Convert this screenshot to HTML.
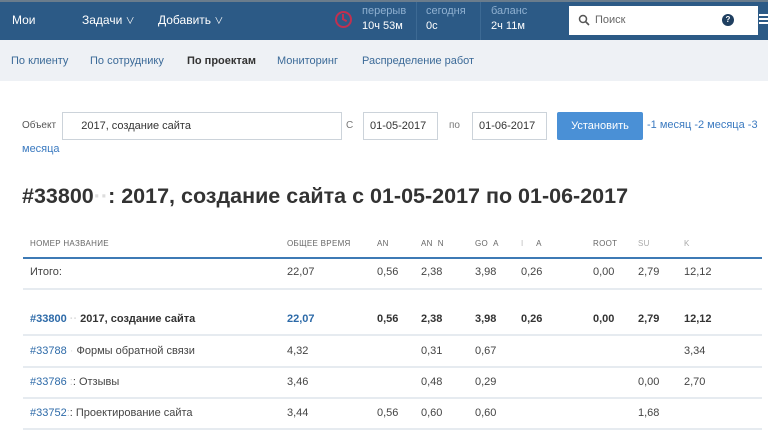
<!DOCTYPE html>
<html><head><meta charset="utf-8"><style>
*{margin:0;padding:0;box-sizing:border-box}
body{width:768px;height:431px;overflow:hidden;background:#fff;font-family:"Liberation Sans","Noto Sans CJK SC",sans-serif;color:#333;position:relative}
.a{position:absolute;white-space:nowrap}
.hdr{left:0;top:0;width:768px;height:40px;background:#2c5a86;border-top:2px solid #6a7c8c}
.w{color:#fff;font-size:12px}
.lb{color:#8fb0d0;font-size:11px}
.sub{left:0;top:40px;width:768px;height:41px;background:#eef1f5}
.nv{font-size:11px;color:#3b6a98;top:55px}
.inp{border:1px solid #ccd3da;height:28px;background:#fff;font-size:11px;color:#333;padding:7px 6px}
.lk{color:#3b7ac0;font-size:11px}
.th{font-size:8px;color:#666;top:239px;letter-spacing:.3px}
.td{font-size:11px;color:#444}
.ln{left:23px;width:739px;height:2px;background:#e6ebf0}
.b{font-weight:bold;color:#333}
.bl{color:#2d6aa8}
</style></head><body>
<div class="a hdr"></div>
<div class="a w" style="left:12px;top:13px">Мои</div>
<div class="a w" style="left:82px;top:13px">Задачи <span style="font-size:9px">&#8744;</span></div>
<div class="a w" style="left:158px;top:13px">Добавить <span style="font-size:9px">&#8744;</span></div>
<div class="a" style="left:335px;top:11px;width:17px;height:17px;border:2px solid #c03050;border-radius:50%"></div>
<div class="a" style="left:342px;top:14px;width:2px;height:6px;background:#c03050"></div>
<div class="a" style="left:342px;top:19px;width:5px;height:2px;background:#c03050;transform:rotate(30deg)"></div>
<div class="a lb" style="left:362px;top:5px">перерыв</div>
<div class="a w" style="left:362px;top:20px;font-size:11px">10ч 53м</div>
<div class="a" style="left:416px;top:2px;width:1px;height:38px;background:#3d6a94"></div>
<div class="a lb" style="left:426px;top:5px">сегодня</div>
<div class="a w" style="left:426px;top:20px;font-size:11px">0с</div>
<div class="a" style="left:480px;top:2px;width:1px;height:38px;background:#3d6a94"></div>
<div class="a lb" style="left:491px;top:5px">баланс</div>
<div class="a w" style="left:491px;top:20px;font-size:11px">2ч 11м</div>
<div class="a" style="left:569px;top:6px;width:189px;height:29px;background:#fff"></div>
<svg class="a" style="left:578px;top:14px" width="12" height="12" viewBox="0 0 12 12"><circle cx="5" cy="5" r="3.5" stroke="#555" stroke-width="1.5" fill="none"/><path d="M7.5 7.5L11 11" stroke="#555" stroke-width="1.6"/></svg>
<div class="a" style="left:595px;top:14px;font-size:11px;color:#666">Поиск</div>
<div class="a" style="left:722px;top:14px;width:12px;height:12px;border-radius:50%;background:#1f3f60;color:#fff;font-size:8px;text-align:center;line-height:12px;font-weight:bold">?</div>
<div class="a" style="left:759px;top:14px;width:9px;height:2px;background:#fff;box-shadow:0 4px #fff,0 8px #fff"></div>
<div class="a sub"></div>
<div class="a nv" style="left:11px">По клиенту</div>
<div class="a nv" style="left:90px">По сотруднику</div>
<div class="a nv" style="left:187px;font-weight:bold;color:#333">По проектам</div>
<div class="a nv" style="left:277px">Мониторинг</div>
<div class="a nv" style="left:362px">Распределение работ</div>
<div class="a" style="left:22px;top:120px;font-size:10px;color:#555">Объект</div>
<div class="a inp" style="left:62px;top:112px;width:280px">&nbsp;&nbsp;&nbsp;&nbsp;2017, создание сайта</div>
<div class="a" style="left:346px;top:120px;font-size:10px;color:#777">С</div>
<div class="a inp" style="left:363px;top:112px;width:75px">01-05-2017</div>
<div class="a" style="left:449px;top:120px;font-size:10px;color:#777">по</div>
<div class="a inp" style="left:472px;top:112px;width:75px">01-06-2017</div>
<div class="a" style="left:557px;top:112px;width:86px;height:28px;background:#4a90d6;border-radius:2px;color:#fff;font-size:11px;text-align:center;line-height:28px">Установить</div>
<div class="a lk" style="left:647px;top:119px">-1 месяц -2 месяца -3</div>
<div class="a lk" style="left:22px;top:143px">месяца</div>
<div class="a" style="left:22px;top:184px;font-size:21.5px;font-weight:bold;color:#333">#33800<span style="color:#ddd">&middot;&middot;</span>: 2017, создание сайта с 01-05-2017 по 01-06-2017</div>
<div class="a th" style="left:30px">НОМЕР НАЗВАНИЕ</div>
<div class="a th" style="left:287px">ОБЩЕЕ ВРЕМЯ</div>
<div class="a th" style="left:377px">AN</div>
<div class="a th" style="left:421px">AN&nbsp;&nbsp;N</div>
<div class="a th" style="left:475px">GO&nbsp;&nbsp;A</div>
<div class="a th" style="left:521px;color:#bbb">I&nbsp;&nbsp;&nbsp;&nbsp;&nbsp;<span style="color:#666">A</span></div>
<div class="a th" style="left:593px">ROOT</div>
<div class="a th" style="left:638px;color:#aaa">SU</div>
<div class="a th" style="left:684px;color:#aaa">K</div>
<div class="a" style="left:23px;top:257px;width:739px;height:2px;background:#3d7ab5"></div>
<div class="a ln" style="top:288px"></div>
<div class="a ln" style="top:334px"></div>
<div class="a ln" style="top:366px"></div>
<div class="a ln" style="top:397px"></div>
<div class="a ln" style="top:428px"></div>

<div class="a td" style="left:30px;top:266px">Итого:</div>
<div class="a td" style="left:287px;top:266px">22,07</div>
<div class="a td" style="left:377px;top:266px">0,56</div>
<div class="a td" style="left:421px;top:266px">2,38</div>
<div class="a td" style="left:475px;top:266px">3,98</div>
<div class="a td" style="left:521px;top:266px">0,26</div>
<div class="a td" style="left:593px;top:266px">0,00</div>
<div class="a td" style="left:638px;top:266px">2,79</div>
<div class="a td" style="left:684px;top:266px">12,12</div>

<div class="a td b" style="left:30px;top:313px"><span class="bl">#33800</span> <span style="color:#ddd">&middot;&middot;</span> 2017, создание сайта</div>
<div class="a td b" style="left:287px;top:313px"><span class="bl">22,07</span></div>
<div class="a td b" style="left:377px;top:313px">0,56</div>
<div class="a td b" style="left:421px;top:313px">2,38</div>
<div class="a td b" style="left:475px;top:313px">3,98</div>
<div class="a td b" style="left:521px;top:313px">0,26</div>
<div class="a td b" style="left:593px;top:313px">0,00</div>
<div class="a td b" style="left:638px;top:313px">2,79</div>
<div class="a td b" style="left:684px;top:313px">12,12</div>

<div class="a td" style="left:30px;top:345px"><span class="bl">#33788</span> <span style="color:#ddd">&middot;</span> Формы обратной связи</div>
<div class="a td" style="left:287px;top:345px">4,32</div>
<div class="a td" style="left:421px;top:345px">0,31</div>
<div class="a td" style="left:475px;top:345px">0,67</div>
<div class="a td" style="left:684px;top:345px">3,34</div>

<div class="a td" style="left:30px;top:376px"><span class="bl">#33786</span> <span style="color:#ccc">:</span>: Отзывы</div>
<div class="a td" style="left:287px;top:376px">3,46</div>
<div class="a td" style="left:421px;top:376px">0,48</div>
<div class="a td" style="left:475px;top:376px">0,29</div>
<div class="a td" style="left:638px;top:376px">0,00</div>
<div class="a td" style="left:684px;top:376px">2,70</div>

<div class="a td" style="left:30px;top:407px"><span class="bl">#33752</span><span style="color:#ccc">:</span>: Проектирование сайта</div>
<div class="a td" style="left:287px;top:407px">3,44</div>
<div class="a td" style="left:377px;top:407px">0,56</div>
<div class="a td" style="left:421px;top:407px">0,60</div>
<div class="a td" style="left:475px;top:407px">0,60</div>
<div class="a td" style="left:638px;top:407px">1,68</div>
</body></html>
